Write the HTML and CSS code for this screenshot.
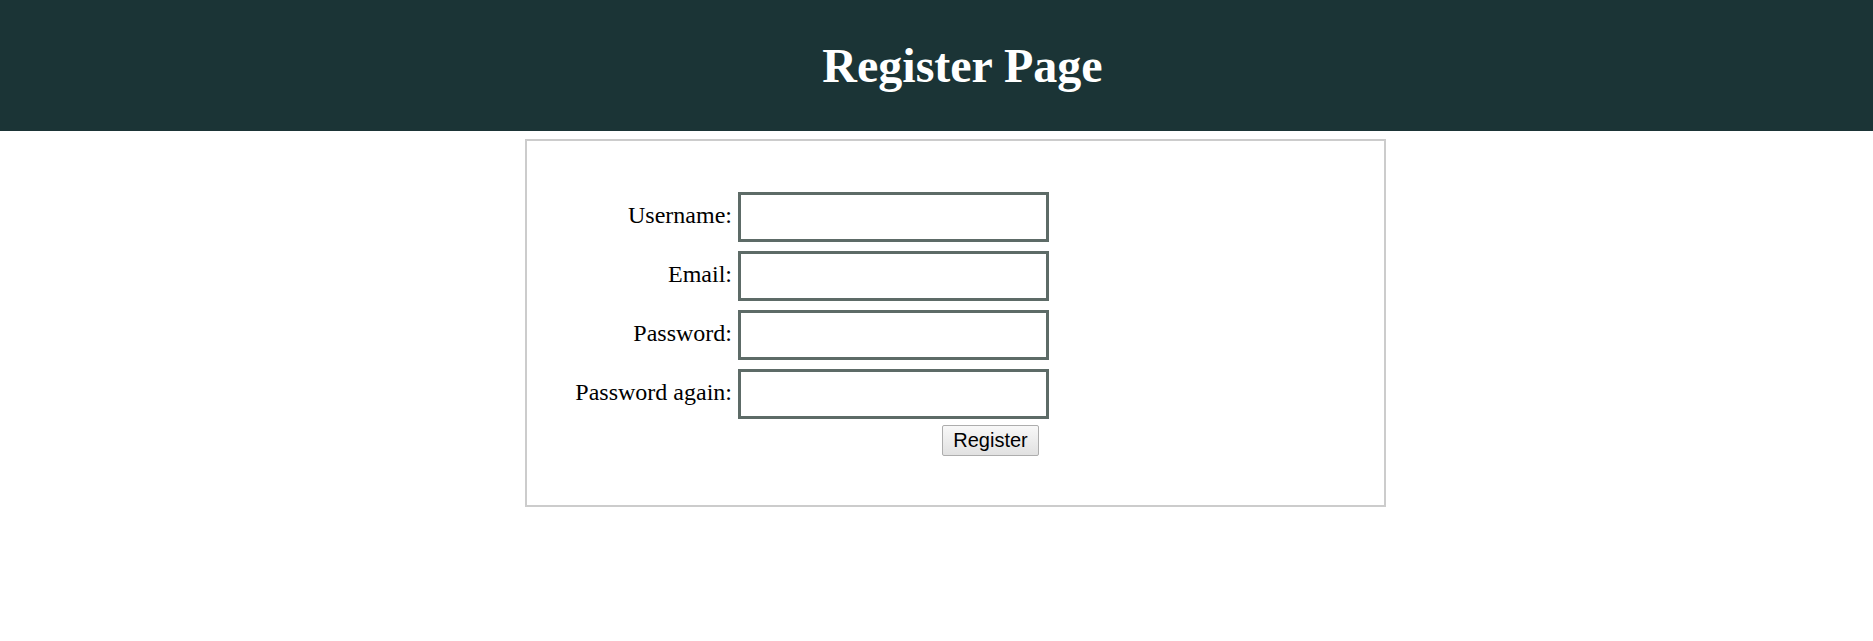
FILE: index.html
```html
<!DOCTYPE html>
<html>
<head>
<meta charset="utf-8">
<title>Register Page</title>
<link rel="stylesheet" href="styles.css">
</head>
<body>
<header class="top-bar">
  <h1 class="title">Register Page</h1>
</header>
<main class="page">
  <form class="register-box">
    <div class="form-grid">
      <label class="field-label" for="username">Username:</label>
      <input class="field-input" id="username" type="text">
      <label class="field-label" for="email">Email:</label>
      <input class="field-input" id="email" type="text">
      <label class="field-label" for="password">Password:</label>
      <input class="field-input" id="password" type="password">
      <label class="field-label" for="password2">Password again:</label>
      <input class="field-input" id="password2" type="password">
      <div class="button-cell">
        <button class="submit-btn" type="button">Register</button>
      </div>
    </div>
  </form>
</main>
</body>
</html>
```

FILE: styles.css
```css
html, body {
  margin: 0;
  padding: 0;
  background: #ffffff;
  font-family: "Liberation Serif", "Times New Roman", serif;
  color: #000;
}

.top-bar {
  height: 131px;
  background: #1b3436;
  display: flex;
  align-items: center;
  justify-content: center;
  padding-left: 52px;
  box-sizing: border-box;
}

.title {
  margin: 0;
  color: #ffffff;
  font-size: 48px;
  font-weight: bold;
  line-height: 1.15;
}

.page {
  padding-top: 8px;
  padding-left: 525px;
}

.register-box {
  width: 861px;
  box-sizing: border-box;
  border: 2px solid #cccccc;
  padding: 51px 0 49px 0;
}

.form-grid {
  display: grid;
  grid-template-columns: 205px 311px;
  column-gap: 6px;
  row-gap: 9px;
  align-items: center;
}

.field-label {
  justify-self: end;
  font-size: 24px;
  line-height: 27px;
  padding-bottom: 4px;
}

.field-input {
  width: 311px;
  height: 50px;
  box-sizing: border-box;
  border: 3px solid #5d6b67;
  margin: 0;
  padding: 0 4px;
  background: #fff;
  font-size: 20px;
}

.button-cell {
  grid-column: 2;
  display: flex;
  justify-content: flex-end;
  padding-right: 10px;
  margin-top: -3px;
}

.submit-btn {
  width: 97px;
  height: 31px;
  box-sizing: border-box;
  font-family: "Liberation Sans", Arial, sans-serif;
  font-size: 20px;
  color: #000;
  border: 1px solid #adadad;
  border-radius: 2px;
  background: linear-gradient(#f8f8f8, #e1e1e1);
  padding: 0;
}
```
